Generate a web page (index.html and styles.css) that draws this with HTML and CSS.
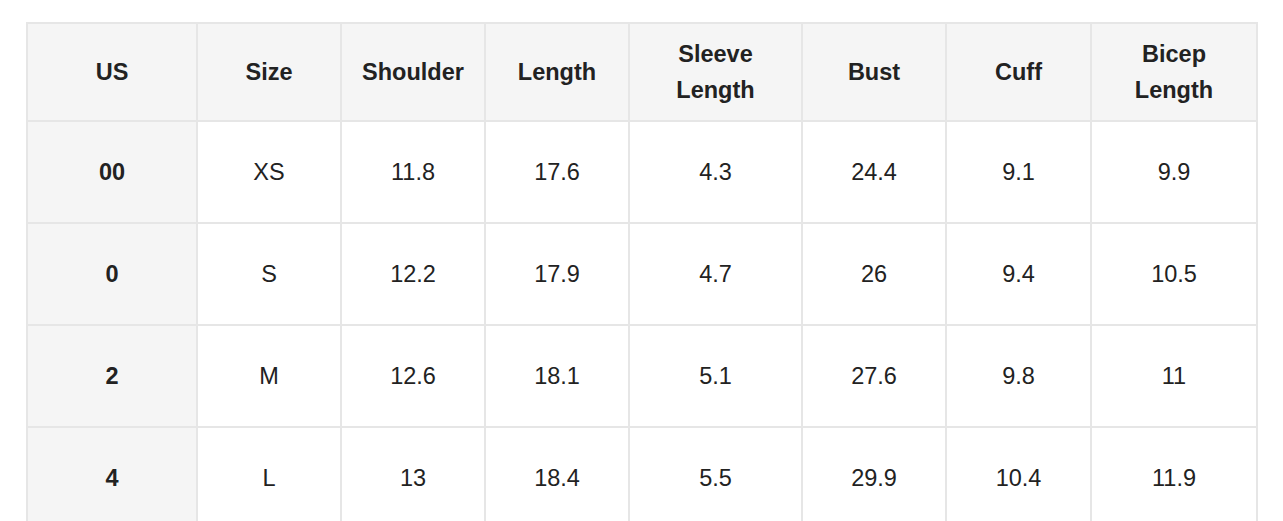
FILE: index.html
```html
<!DOCTYPE html>
<html>
<head>
<meta charset="utf-8">
<link rel="stylesheet" href="styles.css">
</head>
<body>
<table class="size-table">
  <colgroup>
    <col class="c1"><col class="c2"><col class="c3"><col class="c4"><col class="c5"><col class="c6"><col class="c7"><col class="c8">
  </colgroup>
  <thead>
    <tr>
      <th>US</th><th>Size</th><th>Shoulder</th><th>Length</th><th>Sleeve<br>Length</th><th>Bust</th><th>Cuff</th><th>Bicep<br>Length</th>
    </tr>
  </thead>
  <tbody>
    <tr><th>00</th><td>XS</td><td>11.8</td><td>17.6</td><td>4.3</td><td>24.4</td><td>9.1</td><td>9.9</td></tr>
    <tr><th>0</th><td>S</td><td>12.2</td><td>17.9</td><td>4.7</td><td>26</td><td>9.4</td><td>10.5</td></tr>
    <tr><th>2</th><td>M</td><td>12.6</td><td>18.1</td><td>5.1</td><td>27.6</td><td>9.8</td><td>11</td></tr>
    <tr><th>4</th><td>L</td><td>13</td><td>18.4</td><td>5.5</td><td>29.9</td><td>10.4</td><td>11.9</td></tr>
  </tbody>
</table>
</body>
</html>
```
FILE: styles.css
```css
html, body {
  margin: 0;
  padding: 0;
  background: #fff;
}
body {
  padding: 22px 0 0 26px;
  font-family: "Liberation Sans", Arial, sans-serif;
  color: #222;
}
.size-table {
  border-collapse: collapse;
  table-layout: fixed;
  width: 1230px;
  font-size: 23.5px;
  line-height: 36px;
}
.c1 { width: 170px; }
.c2 { width: 144px; }
.c3 { width: 144px; }
.c4 { width: 144px; }
.c5 { width: 173px; }
.c6 { width: 144px; }
.c7 { width: 145px; }
.c8 { width: 166px; }
.size-table th,
.size-table td {
  border: 2px solid #e6e6e6;
  text-align: center;
  vertical-align: middle;
  padding: 0;
}
.size-table thead tr { height: 98px; }
.size-table tbody tr { height: 102px; }
.size-table th {
  font-weight: bold;
  background: #f5f5f5;
}
.size-table td {
  font-weight: normal;
  background: #fff;
}
```
